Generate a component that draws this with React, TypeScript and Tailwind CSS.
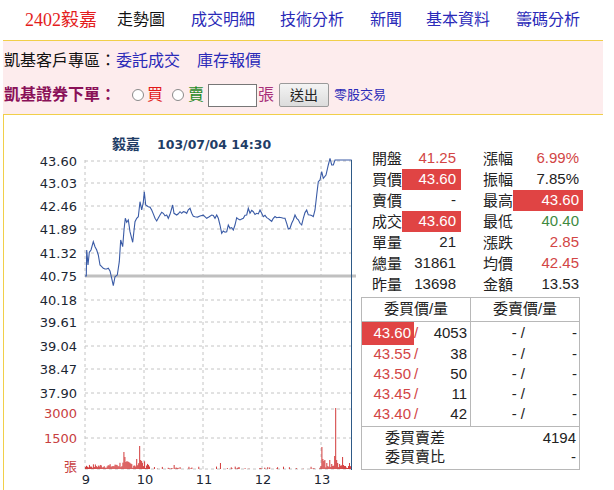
const FONT = "font-['Liberation_Sans','Noto_Sans_CJK_TC',sans-serif]";

// price line, traced from the picture (x*3, (y-115)*3)
const tracePts: [number, number][] = [
  [255, 483], [259, 483], [260, 405], [264, 450], [268, 412], [273, 405], [280, 380], [285, 395],
  [290, 405], [295, 420], [300, 450], [310, 460], [320, 462], [330, 468], [335, 490], [340, 512],
  [345, 485], [352, 480], [358, 440], [362, 375], [368, 395], [372, 345], [376, 310], [380, 322],
  [385, 315], [390, 350], [398, 382], [405, 320], [410, 310], [415, 305], [420, 260], [425, 285],
  [430, 262], [433, 230], [437, 270], [445, 275], [455, 285], [465, 310], [470, 318], [480, 300],
  [490, 295], [500, 300], [505, 310], [510, 298], [518, 270], [522, 295], [530, 300], [540, 290],
  [545, 295], [550, 290], [560, 295], [570, 280], [575, 295], [585, 305], [600, 303], [620, 310],
  [635, 300], [645, 310], [650, 300], [655, 310], [660, 330], [665, 355], [670, 348], [680, 350],
  [685, 330], [690, 340], [700, 345], [705, 330], [710, 308], [720, 315], [730, 310], [740, 300],
  [745, 280], [750, 295], [760, 290], [770, 295], [780, 285], [785, 295], [790, 305], [800, 308],
  [810, 315], [820, 310], [830, 308], [845, 308], [855, 310], [860, 325], [865, 342], [870, 340],
  [875, 325], [885, 300], [890, 310], [900, 325], [905, 330], [910, 310], [920, 285], [930, 300],
  [940, 305], [945, 285], [950, 240], [955, 200], [960, 195], [965, 170], [970, 190], [978, 180],
  [985, 150], [990, 130], [995, 150], [1000, 150], [1005, 135], [1055, 135],
];

let seed = 7;
const rand = () => {
  seed = (seed * 9301 + 49297) % 233280;
  return seed / 233280;
};

function buildPricePath() {
  const out: string[] = [];
  for (let i = 0; i < tracePts.length; i++) {
    const [x, y] = tracePts[i];
    out.push(`${(x / 3).toFixed(1)},${(115 + y / 3).toFixed(1)}`);
    const next = tracePts[i + 1];
    if (next && next[0] - x > 9 && i > 1 && i < tracePts.length - 2) {
      const mx = (x + next[0]) / 2;
      const my = (y + next[1]) / 2 + (rand() - 0.5) * 14;
      out.push(`${(mx / 3).toFixed(1)},${(115 + my / 3).toFixed(1)}`);
    }
  }
  return out.join(' ');
}

const spikes: Record<number, number> = {
  39: 17, 40: 12, 52: 10, 55: 23, 56: 9, 57: 8, 90: 4, 137: 6, 240: 22, 241: 10, 242: 8,
  243: 9, 245: 6, 248: 9, 250: 5, 253: 13, 254: 61, 255: 9, 256: 6, 258: 5, 261: 12, 262: 4,
  263: 3, 268: 6,
};

function buildVolumes() {
  const bars: [number, number][] = [];
  for (let m = 0; m <= 270; m++) {
    let h: number;
    if (spikes[m] !== undefined) h = spikes[m];
    else if (m < 65) h = 1 + rand() * (m > 30 ? 7 : 4);
    else if (m < 238) h = rand() < 0.25 ? rand() * 2.5 : 0;
    else h = 1 + rand() * 4;
    if (h > 0.3) bars.push([85 + m * 0.985, h]);
  }
  return bars;
}

const priceLabels = ['43.60', '43.03', '42.46', '41.89', '41.32', '40.75', '40.18', '39.61', '39.04', '38.47', '37.90'];
const priceY = [161, 183, 206, 229, 253, 276, 300, 322, 346, 369, 393];
const hours = [
  { x: 85, t: '9' },
  { x: 144, t: '10' },
  { x: 203, t: '11' },
  { x: 262, t: '12' },
  { x: 321, t: '13' },
];

function Chart() {
  const pricePath = buildPricePath();
  const vols = buildVolumes();
  return (
    <svg width="354" height="376" viewBox="4 115 354 376" className="shrink-0">
      <text x="112" y="149" fontFamily="DejaVu Sans, Noto Sans CJK TC, sans-serif" fontSize="14" fontWeight="bold" fill="#1f3d66">
        毅嘉
      </text>
      <text x="157" y="149" fontFamily="DejaVu Sans, sans-serif" fontSize="12.5" fontWeight="bold" fill="#1f3d66">
        103/07/04 14:30
      </text>
      {priceY.map((y) => (
        <line key={y} x1="85" x2="351" y1={y} y2={y} stroke="#c4c4c4" strokeDasharray="3 3" />
      ))}
      <line x1="85" x2="351" y1="409" y2="409" stroke="#c4c4c4" strokeDasharray="3 3" />
      <line x1="85" x2="351" y1="438" y2="438" stroke="#c4c4c4" strokeDasharray="3 3" />
      <line x1="85" x2="351" y1="469" y2="469" stroke="#c4c4c4" strokeDasharray="3 3" />
      {hours.map((h) => (
        <line key={h.x} x1={h.x} x2={h.x} y1="160" y2="470" stroke="#c4c4c4" strokeDasharray="3 3" />
      ))}
      {priceLabels.map((l, i) => (
        <text key={l} x="77" y={priceY[i] + 5} textAnchor="end" fontFamily="DejaVu Sans, sans-serif" fontSize="13" fill="#1b2633">
          {l}
        </text>
      ))}
      <text x="77" y="418" textAnchor="end" fontFamily="DejaVu Sans, sans-serif" fontSize="13" fill="#c8403f">3000</text>
      <text x="77" y="443" textAnchor="end" fontFamily="DejaVu Sans, sans-serif" fontSize="13" fill="#c8403f">1500</text>
      <text x="77" y="471" textAnchor="end" fontFamily="Noto Sans CJK TC, sans-serif" fontSize="13" fill="#c8403f">張</text>
      {hours.map((h) => (
        <text key={h.t} x={h.x + 1} y="484" textAnchor="middle" fontFamily="DejaVu Sans, sans-serif" fontSize="13" fill="#1b2633">
          {h.t}
        </text>
      ))}
      <line x1="85" x2="356" y1="276" y2="276" stroke="#c0c0c0" strokeWidth="3" />
      {vols.map(([x, h], i) => (
        <rect key={i} x={x} y={469 - h} width="1" height={h} fill="#d23a3a" />
      ))}
      <polyline points={pricePath} fill="none" stroke="#3a5ba6" strokeWidth="1.1" />
      <line x1="351.5" x2="351.5" y1="160" y2="470" stroke="#2e5a87" strokeWidth="1" />
    </svg>
  );
}

type Cell = { v: string; c?: string; hl?: boolean };

const quoteRows: [string, Cell, string, Cell][] = [
  ['開盤', { v: '41.25', c: 'text-[#d24545]' }, '漲幅', { v: '6.99%', c: 'text-[#d24545]' }],
  ['買價', { v: '43.60', hl: true }, '振幅', { v: '7.85%' }],
  ['賣價', { v: '-' }, '最高', { v: '43.60', hl: true }],
  ['成交', { v: '43.60', hl: true }, '最低', { v: '40.40', c: 'text-[#3f8a3f]' }],
  ['單量', { v: '21' }, '漲跌', { v: '2.85', c: 'text-[#d24545]' }],
  ['總量', { v: '31861' }, '均價', { v: '42.45', c: 'text-[#d24545]' }],
  ['昨量', { v: '13698' }, '金額', { v: '13.53' }],
];

const bids = [
  ['43.60', '4053'],
  ['43.55', '38'],
  ['43.50', '50'],
  ['43.45', '11'],
  ['43.40', '42'],
];

function QuotePanel() {
  return (
    <div className={`flex flex-col pt-[33px] text-[15px] text-[#222] ${FONT}`}>
      <div className="pl-[14px]">
        {quoteRows.map(([l1, c1, l2, c2]) => (
          <div key={l1} className="flex h-[21px] items-center whitespace-nowrap">
            <span className="w-[30px] shrink-0 leading-none">{l1}</span>
            <span
              className={`flex h-[21px] w-[59px] shrink-0 items-center justify-end pr-[5px] ${
                c1.hl ? 'bg-[#e04444] text-white' : c1.c ?? ''
              }`}
            >
              {c1.v}
            </span>
            <span className="ml-[22px] w-[30px] shrink-0 leading-none">{l2}</span>
            <span
              className={`flex h-[21px] w-[70px] shrink-0 items-center justify-end pr-[4px] ${
                c2.hl ? 'bg-[#e04444] text-white' : c2.c ?? ''
              }`}
            >
              {c2.v}
            </span>
          </div>
        ))}
      </div>

      <div className="ml-[3px] mt-[2px] w-[219px] border border-[#b8b8b8]">
        <div className="flex h-[24px] border-b border-[#b8b8b8]">
          <div className="flex w-[109px] items-center justify-center border-r border-[#b8b8b8]">委買價/量</div>
          <div className="flex flex-1 items-center justify-center">委賣價/量</div>
        </div>
        <div className="flex border-b border-[#b8b8b8]">
          <div className="w-[109px] border-r border-[#b8b8b8] pb-[2px]">
            {bids.map(([p, q], i) => (
              <div key={p} className={`flex items-center ${i === 0 ? 'h-[22px]' : 'h-[20px]'}`}>
                <span
                  className={`flex w-[52px] items-center justify-end pr-[3px] ${
                    i === 0 ? 'h-[23px] bg-[#e04444] text-white' : 'text-[#d24545]'
                  }`}
                >
                  {p}
                </span>
                <span className="text-[#d24545]">/</span>
                <span className="flex-1 pr-[3px] text-right">{q}</span>
              </div>
            ))}
          </div>
          <div className="flex-1 pb-[2px]">
            {bids.map(([p], i) => (
              <div key={p} className={`flex items-center ${i === 0 ? 'h-[22px]' : 'h-[20px]'}`}>
                <span className="w-[54px] text-right">- /</span>
                <span className="flex-1 pr-[2px] text-right">-</span>
              </div>
            ))}
          </div>
        </div>
        <div className="flex h-[21px] items-center pt-[2px]">
          <span className="pl-[23px]">委買賣差</span>
          <span className="flex-1 pr-[3px] text-right">4194</span>
        </div>
        <div className="flex h-[21px] items-center pb-[2px]">
          <span className="pl-[23px]">委買賣比</span>
          <span className="flex-1 pr-[3px] text-right">-</span>
        </div>
      </div>
    </div>
  );
}

export default function App() {
  return (
    <div className={`min-h-[490px] w-[614px] overflow-hidden bg-white ${FONT}`}>
      {/* top nav */}
      <div className="flex h-[40px] items-center pl-[25px] text-[16px]">
        <span className="w-[92px] font-['Liberation_Serif','Noto_Sans_CJK_TC',serif] text-[18px] text-[#e41d1d]">2402毅嘉</span>
        <span className="w-[74px] text-[#111]">走勢圖</span>
        <span className="w-[89px] text-[#2a2ab8]">成交明細</span>
        <span className="w-[90px] text-[#2a2ab8]">技術分析</span>
        <span className="w-[56px] text-[#2a2ab8]">新聞</span>
        <span className="w-[90px] text-[#2a2ab8]">基本資料</span>
        <span className="text-[#2a2ab8]">籌碼分析</span>
      </div>

      {/* pink promo band */}
      <div className="mx-[3px] w-[600px] border-t border-[#f1cf4a] bg-[#fdeced] pl-[1px]">
        <div className="flex h-[37px] items-center pt-[2px] text-[16px]">
          <span className="text-[#111]">凱基客戶專區：</span>
          <span className="text-[#2a2ab8]">委託成交</span>
          <span className="ml-[17px] text-[#2a2ab8]">庫存報價</span>
        </div>
        <div className="flex h-[36px] items-center pb-[2px]">
          <span className="w-[128px] text-[16px] font-bold text-[#8a1158]">凱基證券下單：</span>
          <span className="h-[12px] w-[12px] rounded-full border border-[#8a8a8a] bg-white" />
          <span className="ml-[3px] text-[16px] text-[#e21a1a]">買</span>
          <span className="ml-[9px] h-[12px] w-[12px] rounded-full border border-[#8a8a8a] bg-white" />
          <span className="ml-[4px] text-[16px] text-[#1f8a1f]">賣</span>
          <span className="ml-[4px] h-[23px] w-[49px] border border-[#777] bg-white" />
          <span className="ml-[1px] text-[16px] text-[#a8307a]">張</span>
          <button className="ml-[5px] flex h-[24px] w-[50px] items-center justify-center rounded-[2px] border border-[#9a9a9a] bg-gradient-to-b from-[#f4f4f4] to-[#dcdcdc] text-[14px] text-[#222]">
            送出
          </button>
          <span className="ml-[5px] text-[13px] text-[#2a2ab8]">零股交易</span>
        </div>
      </div>

      {/* chart + quote box */}
      <div className="mx-[3px] flex w-[600px] border-l border-t border-[#f1cf4a]">
        <Chart />
        <QuotePanel />
      </div>
    </div>
  );
}
